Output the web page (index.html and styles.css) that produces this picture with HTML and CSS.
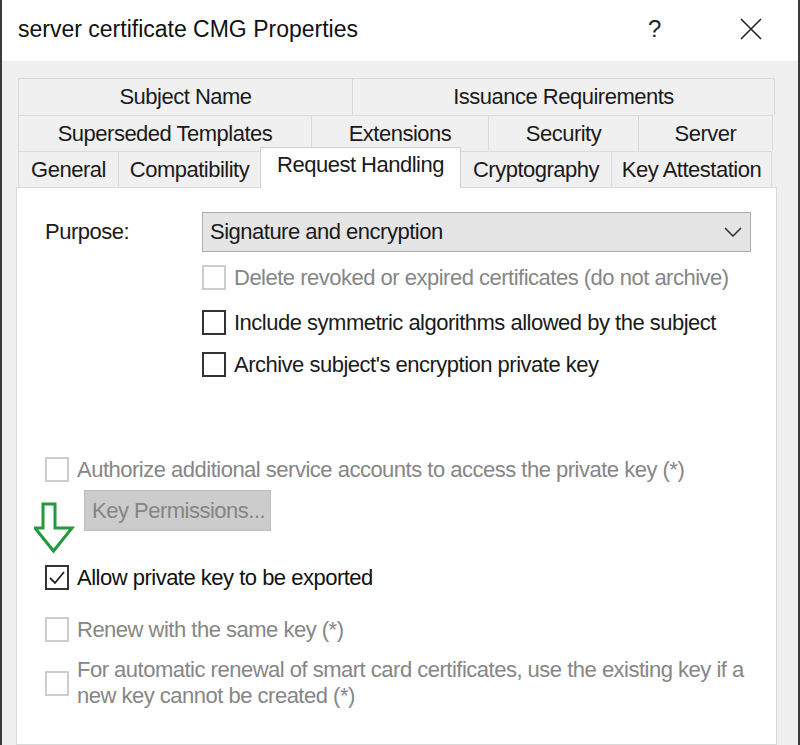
FILE: index.html
```html
<!DOCTYPE html>
<html lang="en">
<head>
    <meta charset="UTF-8">
    <title>server certificate CMG Properties</title>
    <link rel="stylesheet" href="styles.css">
</head>
<body>
    <div class="window">
        <div class="titlebar">
            <span class="title">server certificate CMG Properties</span>
            <span class="help">?</span>
            <span class="close">
                <svg width="22" height="22" viewBox="0 0 22 22"><path d="M1 1 L21 21 M21 1 L1 21" stroke="#222" stroke-width="1.6" fill="none"/></svg>
            </span>
        </div>

        <div class="client">
            <div class="tabs">
                <div class="tab-row row-top">
                    <div class="tab" style="width:335px">Subject Name</div>
                    <div class="tab" style="width:423px">Issuance Requirements</div>
                </div>
                <div class="tab-row">
                    <div class="tab" style="width:294px">Superseded Templates</div>
                    <div class="tab" style="width:178px">Extensions</div>
                    <div class="tab" style="width:151px">Security</div>
                    <div class="tab" style="width:135px">Server</div>
                </div>
                <div class="tab-row">
                    <div class="tab" style="width:101px">General</div>
                    <div class="tab" style="width:143px">Compatibility</div>
                    <div class="tab active" style="width:201px">Request Handling</div>
                    <div class="tab" style="width:152px">Cryptography</div>
                    <div class="tab" style="width:161px">Key Attestation</div>
                </div>
            </div>

            <div class="panel">
                <div class="purpose-row">
                    <span class="label">Purpose:</span>
                    <div class="dropdown">
                        <span>Signature and encryption</span>
                        <svg width="18" height="10" viewBox="0 0 18 10"><path d="M1 1 L9 9 L17 1" stroke="#333" stroke-width="1.6" fill="none"/></svg>
                    </div>
                </div>

                <div class="options">
                    <div class="check disabled opt-delete"><span class="box"></span>Delete revoked or expired certificates (do not archive)</div>
                    <div class="check opt-sym"><span class="box"></span>Include symmetric algorithms allowed by the subject</div>
                    <div class="check opt-archive"><span class="box"></span>Archive subject's encryption private key</div>
                </div>

                <div class="check disabled opt-auth"><span class="box"></span>Authorize additional service accounts to access the private key (*)</div>
                <div class="key-btn">Key Permissions...</div>

                <div class="check opt-allow">
                    <span class="box checked">
                        <svg width="20" height="20" viewBox="0 0 20 20"><path d="M3 10 L8 15 L17 4" stroke="#222" stroke-width="1.8" fill="none"/></svg>
                    </span>Allow private key to be exported
                </div>
                <div class="check disabled opt-renew"><span class="box"></span>Renew with the same key (*)</div>
                <div class="check disabled opt-auto"><span class="box"></span><span class="wrap">For automatic renewal of smart card certificates, use the existing key if a new key cannot be created (*)</span></div>

                <svg class="arrow" width="44" height="52" viewBox="0 0 44 52">
                    <path d="M9 2 H21 V26 H38 L19.5 49 L1 26 H9 Z" stroke="#239a3b" stroke-width="3" fill="none" stroke-linejoin="miter"/>
                </svg>
            </div>
        </div>
    </div>
</body>
</html>
```

FILE: styles.css
```css
body {
    margin: 0;
    padding: 0;
    font-family: 'Liberation Sans', Arial, sans-serif;
    font-size: 22px;
    letter-spacing: -0.5px;
    color: #1a1a1a;
    background-color: #fff;
}

.window {
    height: 745px;
    box-sizing: border-box;
    border-left: 2px solid #3a3a3a;
    border-right: 2px solid #3a3a3a;
    display: flex;
    flex-direction: column;
    overflow: hidden;
}

.titlebar {
    height: 61px;
    flex-shrink: 0;
    background-color: #fff;
    display: flex;
    align-items: center;
}

.title {
    flex: 1;
    margin-left: 16px;
    margin-top: -2px;
    font-size: 23px;
    letter-spacing: 0;
    color: #111;
}

.help {
    width: 20px;
    margin-right: 72px;
    font-size: 24px;
    color: #222;
    margin-top: -4px;
}

.close {
    width: 22px;
    margin-right: 36px;
    display: flex;
    margin-top: -4px;
}

.client {
    flex: 1;
    background-color: #f0f0f0;
    padding: 17px 21px 0 14px;
    display: flex;
    flex-direction: column;
}

.tabs {
    padding: 0 1px 0 2px;
}

.tab-row {
    display: flex;
    height: 36px;
}

.row-top {
    height: 37px;
}

.tab {
    box-sizing: border-box;
    border: 1px solid #dadada;
    border-bottom: none;
    margin-left: -1px;
    text-align: center;
    line-height: 36px;
    white-space: nowrap;
    color: #1a1a1a;
}

.tab:first-child {
    margin-left: 0;
}

.tab.active {
    background-color: #fff;
    border-color: #d0d0d0;
    margin-top: -4px;
    height: 41px;
    line-height: 34px;
    position: relative;
    z-index: 1;
}

.panel {
    flex: 1;
    background-color: #fff;
    border: 1px solid #d9d9d9;
    padding: 24px 0 0 28px;
    position: relative;
}

.purpose-row {
    display: flex;
    align-items: center;
}

.label {
    width: 157px;
}

.dropdown {
    box-sizing: border-box;
    width: 549px;
    height: 40px;
    background-color: #e5e5e5;
    border: 1px solid #acacac;
    display: flex;
    align-items: center;
    justify-content: space-between;
    padding: 0 8px 0 7px;
}

.options {
    margin-left: 157px;
    padding-top: 13px;
}

.check {
    display: flex;
    align-items: center;
    height: 25px;
    line-height: 26px;
}

.box {
    box-sizing: border-box;
    width: 24px;
    height: 25px;
    flex-shrink: 0;
    border: 2px solid #333;
    background-color: #fff;
    margin-right: 8px;
    display: flex;
    align-items: center;
    justify-content: center;
}

.disabled {
    color: #868686;
}

.disabled .box {
    border-color: #cdcdcd;
}

.opt-sym {
    margin-top: 20px;
}

.opt-archive {
    margin-top: 17px;
}

.opt-auth {
    margin-top: 80px;
}

.key-btn {
    box-sizing: border-box;
    width: 187px;
    height: 41px;
    margin: 8px 0 0 39px;
    background-color: #cccccc;
    border: 1px solid #bdbdbd;
    color: #858585;
    line-height: 39px;
    padding-left: 7px;
}

.opt-allow {
    margin-top: 34px;
    color: #111;
}

.opt-renew {
    margin-top: 27px;
}

.opt-auto {
    margin-top: 15px;
    height: 52px;
}

.opt-auto .wrap {
    width: 690px;
}

.arrow {
    position: absolute;
    left: 17px;
    top: 314px;
}
```
